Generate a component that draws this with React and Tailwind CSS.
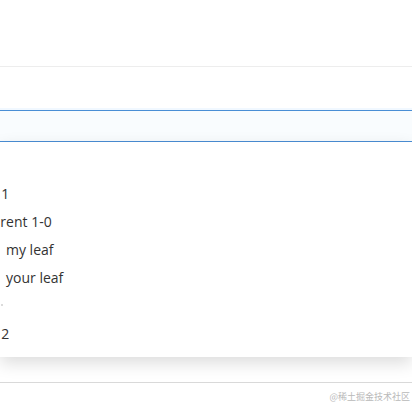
export default function App() {
  const rows = [
    { text: "parent 1", cls: "-ml-[46px]" },
    { text: "parent 1-0", cls: "-ml-[16px]" },
    { text: "my leaf", cls: "ml-[6px]" },
    { text: "your leaf", cls: "ml-[6px]" },
    { text: null },
    { text: "parent 2", cls: "-ml-[46px]" },
  ];

  return (
    <div className="flex h-[412px] w-[412px] flex-col overflow-hidden bg-white font-['Open_Sans','Noto_Sans',sans-serif] text-[14px] text-[#333]">
      <div className="h-[66px] shrink-0" />
      <div className="h-[44px] shrink-0 border-t border-[#ededed] bg-white" />
      <div className="h-[32px] shrink-0 border-y border-[#4a8ed5] bg-[#f9fcfe] shadow-[0_0_0_2px_rgba(24,144,255,0.06)]" />
      <div className="relative z-10 flex h-[215px] shrink-0 flex-col bg-white pt-[37px] shadow-[0_6px_16px_rgba(0,0,0,0.14)]">
        {rows.map((r, i) => (
          <div key={i} className="flex h-7 items-center whitespace-nowrap">
            {r.text ? (
              <span className={r.cls}>{r.text}</span>
            ) : (
              <span className="ml-[1px] h-[2px] w-[2px] rounded-full bg-[#cfcfcf]" />
            )}
          </div>
        ))}
      </div>
      <div className="h-[25px] shrink-0" />
      <div className="flex flex-1 items-center justify-end border-t border-[#d9d9d9] pr-[2px] pb-[2px]">
        <span className="font-['Noto_Sans_CJK_SC',sans-serif] text-[9px] text-[#b9b9b9]">@稀土掘金技术社区</span>
      </div>
    </div>
  );
}
